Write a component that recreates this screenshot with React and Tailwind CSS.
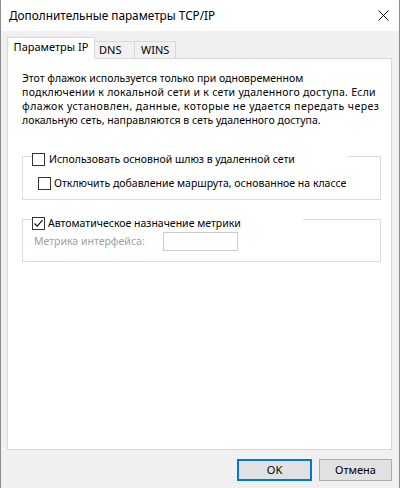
import React from 'react';

function Check({ checked }) {
	return (
		<span className="w-[13px] h-[13px] border border-[#333333] bg-white flex items-center justify-center shrink-0">
			{checked && (
				<svg width="11" height="11" viewBox="0 0 11 11">
					<path d="M1.5 5.5 L4.2 8.2 L9.5 2.2" stroke="#111" strokeWidth="1.2" fill="none" />
				</svg>
			)}
		</span>
	);
}

export default function App() {
	return (
		<div className="w-[400px] h-[488px] bg-[#f0f0f0] border-x border-[#8c8c8c] flex flex-col text-black font-['Noto_Sans',sans-serif] text-[11px] overflow-hidden">
			{/* title bar */}
			<div className="h-[31px] bg-white flex items-center justify-between pl-[8px] pr-[10px] shrink-0">
				<span className="text-[11.8px] leading-none">Дополнительные параметры TCP/IP</span>
				<svg width="11" height="11" viewBox="0 0 11 11">
					<path d="M0.5 0.5 L10.5 10.5 M10.5 0.5 L0.5 10.5" stroke="#111" strokeWidth="1" fill="none" />
				</svg>
			</div>

			<div className="pl-[6px] pr-[7px] pt-[6px] flex flex-col">
				{/* tabs */}
				<div className="flex items-end h-[21px]">
					<div className="w-[88px] h-[22px] -mb-px relative z-10 bg-white border border-b-0 border-[#d9d9d9] flex items-center justify-center pb-[2px]">
						Параметры IP
					</div>
					<div className="w-[40px] h-[17px] border border-l-0 border-b-0 border-[#d9d9d9] flex items-center pl-[4px]">
						DNS
					</div>
					<div className="w-[41px] h-[17px] border border-l-0 border-b-0 border-[#d9d9d9] flex items-center pl-[6px]">
						WINS
					</div>
				</div>

				{/* panel */}
				<div className="h-[392px] bg-white border border-[#d9d9d9] pt-[12px] pl-[14px] pr-[10px] flex flex-col text-[10.5px]">
					<p className="leading-[14px] whitespace-nowrap">
						Этот флажок используется только при одновременном
						<br />
						<span className="tracking-[0.27px]">подключении к локальной сети и к сети удаленного доступа. Если</span>
						<br />
						<span className="tracking-[0.45px]">флажок установлен, данные, которые не удается передать через</span>
						<br />
						локальную сеть, направляются в сеть удаленного доступа.
					</p>

					<div className="relative mt-[29px] h-[44px] border border-[#dcdcdc] pt-[20px] pl-[15px]">
						<div className="absolute left-[9px] top-[-4px] w-[316px] bg-white flex items-center gap-[4px]">
							<Check />
							<span className="leading-[13px]">Использовать основной шлюз в удаленной сети</span>
						</div>
						<div className="flex items-center gap-[3px]">
							<Check />
							<span className="leading-[13px]">Отключить добавление маршрута, основанное на классе</span>
						</div>
					</div>

					<div className="relative mt-[19px] h-[43px] border border-[#dcdcdc] pt-[12px] pl-[11px]">
						<div className="absolute left-[9px] top-[-3px] w-[271px] bg-white flex items-center gap-[3px]">
							<Check checked />
							<span className="leading-[13px]">Автоматическое назначение метрики</span>
						</div>
						<div className="flex items-center">
							<span className="text-[#a0a0a0] w-[129px]">Метрика интерфейса:</span>
							<div className="w-[75px] h-[19px] border border-[#cccccc] bg-white" />
						</div>
					</div>
				</div>

				{/* buttons */}
				<div className="flex justify-end gap-[7px] mt-[9px]">
					<button className="w-[75px] h-[22px] bg-[#e1e1e1] border-2 border-[#0078d7] flex items-center justify-center">
						OK
					</button>
					<button className="w-[73px] h-[22px] bg-[#e1e1e1] border border-[#adadad] flex items-center justify-center">
						Отмена
					</button>
				</div>
			</div>
		</div>
	);
}
